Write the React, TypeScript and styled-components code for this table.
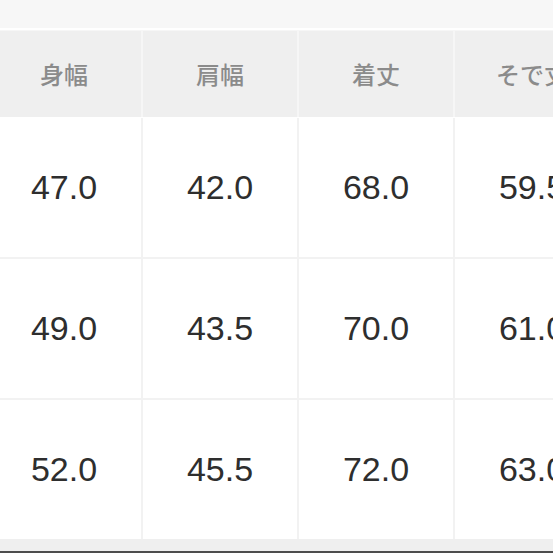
import React from "react";
import styled, { createGlobalStyle } from "styled-components";

const Global = createGlobalStyle`
  html, body { margin: 0; padding: 0; background: #ffffff; }
  #root { width: 553px; height: 553px; }
`;

const Page = styled.div`
  width: 553px;
  height: 553px;
  overflow: hidden;
  display: flex;
  flex-direction: column;
  background: #ffffff;
`;

const TopBand = styled.div`
  height: 28px;
  flex: none;
  background: #f7f7f7;
  border-bottom: 2px solid #ffffff;
`;

const Grid = styled.div<{ $sep: string }>`
  display: grid;
  grid-template-columns: repeat(4, 154px);
  column-gap: 2px;
  margin-left: -13px;
  background: ${(p) => p.$sep};
  flex: none;
`;

const Body = styled.div`
  display: flex;
  flex-direction: column;
  gap: 2px;
  background: #f2f2f2;
  margin-top: 1px;
  flex: none;
`;

const HeaderCell = styled.div`
  height: 86px;
  margin-top: 1px;
  background: #efefef;
  display: flex;
  align-items: center;
  justify-content: center;
  white-space: nowrap;
  font-family: "Noto Sans CJK JP", "Noto Sans", sans-serif;
  font-weight: 500;
  font-size: 24px;
  color: #8b8b8b;
  padding-bottom: 2px;
  box-sizing: border-box;
`;

const Cell = styled.div`
  height: 139px;
  background: #ffffff;
  display: flex;
  align-items: center;
  justify-content: center;
  white-space: nowrap;
  font-family: "Liberation Sans", Arial, sans-serif;
  font-size: 34px;
  color: #2e2e2e;
`;

const BottomBand = styled.div`
  height: 12px;
  flex: none;
  background: #efefef;
  border-bottom: 2px solid #4d4d4d;
`;

const headers = ["身幅", "肩幅", "着丈", "そで丈"];
const rows = [
  ["47.0", "42.0", "68.0", "59.5"],
  ["49.0", "43.5", "70.0", "61.0"],
  ["52.0", "45.5", "72.0", "63.0"],
];

export default function App() {
  return (
    <>
      <Global />
      <Page>
        <TopBand />
        <Grid $sep="#f6f6f6">
          {headers.map((h) => (
            <HeaderCell key={h}>{h}</HeaderCell>
          ))}
        </Grid>
        <Body>
          {rows.map((r, i) => (
            <Grid key={i} $sep="#f2f2f2">
              {r.map((v, j) => (
                <Cell key={j}>{v}</Cell>
              ))}
            </Grid>
          ))}
        </Body>
        <BottomBand />
      </Page>
    </>
  );
}
